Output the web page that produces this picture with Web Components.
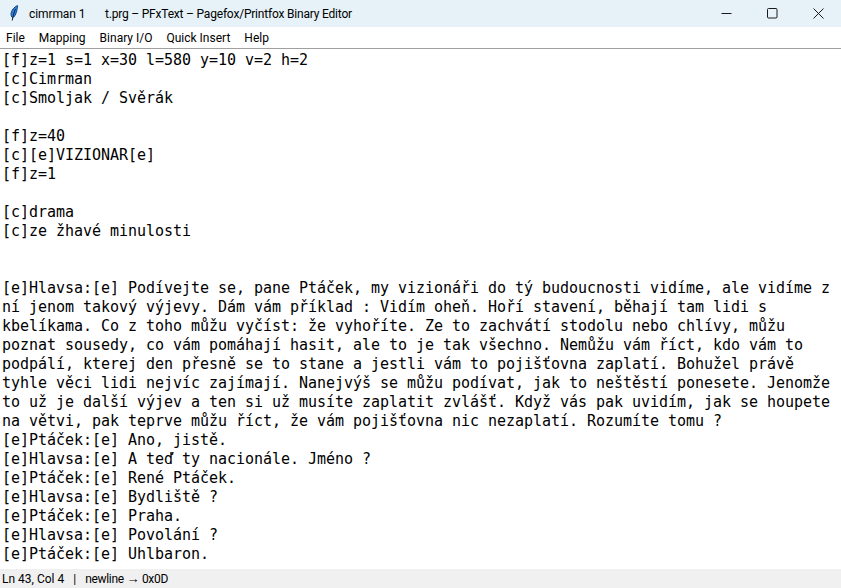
<!DOCTYPE html>
<html>
<head>
<meta charset="utf-8">
<title>t.prg – PFxText</title>
<style>
  html, body { margin: 0; height: 100%; background: #fff; }
  .arrow { font-family: "Liberation Sans", sans-serif; font-size: 13px; }
</style>
</head>
<body>
<app-window>
  <title-bar slot="top" app="cimrman 1" doc="t.prg – PFxText – Pagefox/Printfox Binary Editor"></title-bar>
  <menu-bar slot="top">
    <span>File</span><span>Mapping</span><span>Binary I/O</span><span>Quick Insert</span><span>Help</span>
  </menu-bar>
  <editor-text>[f]z=1 s=1 x=30 l=580 y=10 v=2 h=2
[c]Cimrman
[c]Smoljak / Svěrák

[f]z=40
[c][e]VIZIONAR[e]
[f]z=1

[c]drama
[c]ze žhavé minulosti


[e]Hlavsa:[e] Podívejte se, pane Ptáček, my vizionáři do tý budoucnosti vidíme, ale vidíme z ní jenom takový výjevy. Dám vám příklad : Vidím oheň. Hoří stavení, běhají tam lidi s kbelíkama. Co z toho můžu vyčíst: že vyhoříte. Ze to zachvátí stodolu nebo chlívy, můžu poznat sousedy, co vám pomáhají hasit, ale to je tak všechno. Nemůžu vám říct, kdo vám to podpálí, kterej den přesně se to stane a jestli vám to pojišťovna zaplatí. Bohužel právě tyhle věci lidi nejvíc zajímají. Nanejvýš se můžu podívat, jak to neštěstí ponesete. Jenomže to už je další výjev a ten si už musíte zaplatit zvlášť. Když vás pak uvidím, jak se houpete na větvi, pak teprve můžu říct, že vám pojišťovna nic nezaplatí. Rozumíte tomu ?
[e]Ptáček:[e] Ano, jistě.
[e]Hlavsa:[e] A teď ty nacionále. Jméno ?
[e]Ptáček:[e] René Ptáček.
[e]Hlavsa:[e] Bydliště ?
[e]Ptáček:[e] Praha.
[e]Hlavsa:[e] Povolání ?
[e]Ptáček:[e] Uhlbaron.</editor-text>
  <status-bar slot="bottom"><span>Ln 43, Col 4</span><span>|</span><span>newline <span class="arrow">→</span> 0x0D</span></status-bar>
</app-window>
<script>
class AppWindow extends HTMLElement {
  constructor() {
    super();
    this.attachShadow({ mode: "open" }).innerHTML = `
      <style>
        :host { display: flex; flex-direction: column; height: 100vh; overflow: hidden; }
        main { flex: 1; min-height: 0; overflow: hidden; display: flex; }
      </style>
      <slot name="top"></slot>
      <main><slot></slot></main>
      <slot name="bottom"></slot>`;
  }
}

class TitleBar extends HTMLElement {
  constructor() {
    super();
    this.attachShadow({ mode: "open" }).innerHTML = `
      <style>
        :host {
          display: flex; align-items: center; height: 27px; flex: none;
          background: #e6f2f7; color: #000;
          font: 12px Roboto, "Noto Sans", sans-serif;
        }
        .icon { width: 12px; height: 18px; margin: 0 8px 0 9px; flex: none; }
        .app { width: 76px; flex: none; white-space: nowrap; letter-spacing: -0.1px; }
        .doc { flex: 1; white-space: nowrap; letter-spacing: -0.2px; }
        .ctl { width: 46px; height: 27px; display: flex; align-items: center; justify-content: center; flex: none; }
      </style>
      <svg class="icon" viewBox="0 0 12 18">
        <path d="M8.500.500C5 2 2.300 5.500 2 8.500c-.1 2 .5 3.500 1.700 4.300C6 11.500 8 8 8.500.500z" fill="#2f7fd8" stroke="#174a8a" stroke-width="1"/>
        <path d="M6.500 4C5 7.500 4 11 3.200 15.500" fill="none" stroke="#0e2342" stroke-width="1"/>
      </svg>
      <span class="app"></span>
      <span class="doc"></span>
      <span class="ctl"><svg width="11" height="11" viewBox="0 0 11 11"><path d="M.5 5.500h10" stroke="#1a1a1a" fill="none"/></svg></span>
      <span class="ctl"><svg width="11" height="11" viewBox="0 0 11 11"><rect x=".5" y=".5" width="9.500" height="9.500" rx="1" stroke="#1a1a1a" fill="none"/></svg></span>
      <span class="ctl"><svg width="11" height="11" viewBox="0 0 11 11"><path d="M.5.500l10 10M10.500.500l-10 10" stroke="#1a1a1a" fill="none"/></svg></span>`;
    this.shadowRoot.querySelector(".app").textContent = this.getAttribute("app");
    this.shadowRoot.querySelector(".doc").textContent = this.getAttribute("doc");
  }
}

class MenuBar extends HTMLElement {
  constructor() {
    super();
    this.attachShadow({ mode: "open" }).innerHTML = `
      <style>
        :host {
          display: flex; align-items: center; gap: 14px; flex: none;
          height: 21px; padding-left: 6px; background: #fff; color: #000;
          border-bottom: 1px solid #a0a0a0;
          font: 12px Roboto, "Noto Sans", sans-serif;
        }
      </style>
      <slot></slot>`;
  }
}

class EditorText extends HTMLElement {
  constructor() {
    super();
    this.attachShadow({ mode: "open" }).innerHTML = `
      <style>
        :host {
          display: block; flex: 1; box-sizing: border-box; padding: 2px 4px 0 2px;
          background: #fff; color: #000;
          font: 15px/19px "DejaVu Sans Mono", monospace;
          letter-spacing: -0.03px;
        }
        .text { white-space: pre-wrap; }
      </style>
      <div class="text"><slot></slot></div>`;
  }
}

class StatusBar extends HTMLElement {
  constructor() {
    super();
    this.attachShadow({ mode: "open" }).innerHTML = `
      <style>
        :host {
          display: flex; align-items: center; gap: 9px; height: 19px; flex: none;
          padding-left: 2px; background: #f0f0f0; color: #000;
          font: 12px Roboto, "Noto Sans", sans-serif;
        }
        ::slotted(span:last-child) { letter-spacing: -0.3px; }
      </style>
      <slot></slot>`;
  }
}

customElements.define("app-window", AppWindow);
customElements.define("title-bar", TitleBar);
customElements.define("menu-bar", MenuBar);
customElements.define("editor-text", EditorText);
customElements.define("status-bar", StatusBar);
</script>
</body>
</html>
